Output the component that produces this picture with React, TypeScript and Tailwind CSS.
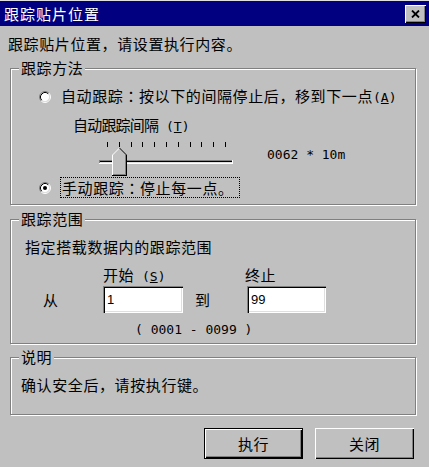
import React from "react";

function Radio({ checked }: { checked?: boolean }) {
  return (
    <svg width="12" height="12" viewBox="0 0 12 12" className="shrink-0">
      <circle cx="6" cy="6" r="4.5" fill="#fff" />
      <path d="M2.11 9.89A5.5 5.5 0 0 1 9.89 2.11" stroke="#808080" fill="none" />
      <path d="M9.89 2.11A5.5 5.5 0 0 1 2.11 9.89" stroke="#fff" fill="none" />
      <path d="M2.82 9.18A4.5 4.5 0 0 1 9.18 2.82" stroke="#000" fill="none" />
      <path d="M9.18 2.82A4.5 4.5 0 0 1 2.82 9.18" stroke="#dfdfdf" fill="none" />
      {checked && <circle cx="6" cy="6" r="2" fill="#000" />}
    </svg>
  );
}

function Group({
  title,
  className,
  children,
}: {
  title: string;
  className: string;
  children: React.ReactNode;
}) {
  return (
    <div
      className={
        "relative ml-[10px] w-[406px] border border-[#808080] shadow-[inset_1px_1px_0_#fff,1px_1px_0_#fff] flex flex-col " +
        className
      }
    >
      <span className="absolute left-[8px] top-[-11px] bg-[#c0c0c0] px-[2px] leading-[20px] h-[20px]">
        {title}
      </span>
      {children}
    </div>
  );
}

function Mono({ children }: { children: React.ReactNode }) {
  return (
    <span className="font-['DejaVu_Sans_Mono',monospace] text-[13px] tracking-normal">
      {children}
    </span>
  );
}

function Colon() {
  return <span className="font-['Noto_Sans_CJK_TC',sans-serif]">：</span>;
}

function Slider() {
  const ticks = Array.from({ length: 11 }, (_, i) => Math.round(8 + i * 11.8));
  return (
    <svg width="140" height="36" viewBox="0 0 140 36" shapeRendering="crispEdges" className="shrink-0">
      {ticks.map((x) => (
        <rect key={x} x={x} y={2} width={1} height={5} fill="#000" />
      ))}
      <rect x={0} y={20} width={134} height={1} fill="#808080" />
      <rect x={0} y={20} width={1} height={4} fill="#808080" />
      <rect x={1} y={21} width={132} height={1} fill="#000" />
      <rect x={1} y={22} width={132} height={1} fill="#dfdfdf" />
      <rect x={0} y={23} width={134} height={1} fill="#fff" />
      <rect x={133} y={20} width={1} height={4} fill="#fff" />
      <g>
        <polygon points="13,15 20,8 27,15 27,35 13,35" fill="#c0c0c0" />
        <rect x={13} y={15} width={1} height={20} fill="#fff" />
        <rect x={26} y={15} width={1} height={19} fill="#808080" />
        <rect x={27} y={15} width={1} height={21} fill="#000" />
        <rect x={14} y={34} width={13} height={1} fill="#808080" />
        <rect x={13} y={35} width={15} height={1} fill="#000" />
        <line x1={13.5} y1={15} x2={20.5} y2={8} stroke="#fff" shapeRendering="auto" />
        <line x1={20.5} y1={8} x2={27.5} y2={15} stroke="#000" shapeRendering="auto" />
      </g>
    </svg>
  );
}

function TextField({ value, w }: { value: string; w: string }) {
  return (
    <div
      className={
        "h-[27px] bg-white shadow-[inset_1px_1px_0_#808080,inset_2px_2px_0_#000,inset_-1px_-1px_0_#fff,inset_-2px_-2px_0_#dfdfdf] flex items-center pl-[4px] font-['Liberation_Sans',sans-serif] text-[13px] tracking-normal " +
        w
      }
    >
      {value}
    </div>
  );
}

export default function App() {
  return (
    <div className="w-[429px] h-[467px] bg-[#c0c0c0] flex flex-col text-black font-['Noto_Sans_CJK_SC','Noto_Sans',sans-serif] text-[15px] tracking-[0.6px] leading-[20px] overflow-hidden">
      {/* title bar */}
      <div className="h-[26px] border-t border-[#dfdfdf] bg-[#000080] flex items-center shrink-0">
        <span className="pl-[4px] text-white tracking-[1px]">跟踪贴片位置</span>
        <div className="ml-auto mr-[3px] w-[21px] h-[18px] bg-[#c0c0c0] shadow-[inset_1px_1px_0_#fff,inset_-1px_-1px_0_#000,inset_-2px_-2px_0_#808080] flex items-center justify-center">
          <svg width="9" height="8" viewBox="0 0 9 8">
            <path d="M1 0.5 L8 7.5 M8 0.5 L1 7.5" stroke="#000" strokeWidth="1.8" />
          </svg>
        </div>
      </div>

      <div className="mt-[8px] h-[20px] pl-[8px]">跟踪贴片位置，请设置执行内容。</div>

      <Group title="跟踪方法" className="mt-[14px] h-[137px]">
        <div className="mt-[18px] h-[20px] flex items-center pl-[28px]">
          <Radio />
          <span className="ml-[10px]">
            自动跟踪<Colon />按以下的间隔停止后，移到下一点
            <Mono>
              (<span className="underline">A</span>)
            </Mono>
          </span>
        </div>
        <div className="mt-[8px] h-[20px] pl-[62px]">
          <span className="tracking-[-0.8px]">自动跟踪间隔</span>
          <Mono>
            {" "}(<span className="underline">T</span>)
          </Mono>
        </div>
        <div className="mt-[5px] flex pl-[88px]">
          <Slider />
          <div className="mt-[3px] ml-[28px] h-[20px]">
            <Mono>0062 * 10m</Mono>
          </div>
        </div>
        <div className="mt-[1px] h-[21px] flex items-center pl-[28px]">
          <Radio checked />
          <span className="ml-[9px] h-[21px] w-[180px] border border-dotted border-black flex items-center pl-[1px]">
            手动跟踪<Colon />停止每一点。
          </span>
        </div>
      </Group>

      <Group title="跟踪范围" className="mt-[14px] h-[125px]">
        <div className="mt-[17px] h-[20px] pl-[14px]">指定搭载数据内的跟踪范围</div>
        <div className="mt-[8px] h-[20px] flex pl-[92px]">
          <span className="w-[142px]">
            开始
            <Mono>
              {" "}(<span className="underline">S</span>)
            </Mono>
          </span>
          <span>终止</span>
        </div>
        <div className="mt-[1px] h-[27px] flex items-center pl-[32px]">
          <span className="w-[60px]">从</span>
          <TextField value="1" w="w-[80px]" />
          <span className="ml-[12px] w-[52px]">到</span>
          <TextField value="99" w="w-[79px]" />
        </div>
        <div className="mt-[5px] h-[20px] pl-[124px]">
          <Mono>( 0001 - 0099 )</Mono>
        </div>
      </Group>

      <Group title="说明" className="mt-[13px] h-[58px]">
        <div className="mt-[17px] h-[20px] pl-[10px]">确认安全后，请按执行键。</div>
      </Group>

      <div className="mt-[13px] flex justify-end pr-[15px] gap-[12px]">
        <button className="w-[99px] h-[31px] border border-black bg-[#c0c0c0] shadow-[inset_1px_1px_0_#fff,inset_-1px_-1px_0_#000,inset_-2px_-2px_0_#808080] flex items-center justify-center">
          执行
        </button>
        <button className="w-[99px] h-[31px] bg-[#c0c0c0] shadow-[inset_1px_1px_0_#fff,inset_-1px_-1px_0_#000,inset_-2px_-2px_0_#808080] flex items-center justify-center">
          关闭
        </button>
      </div>
    </div>
  );
}
